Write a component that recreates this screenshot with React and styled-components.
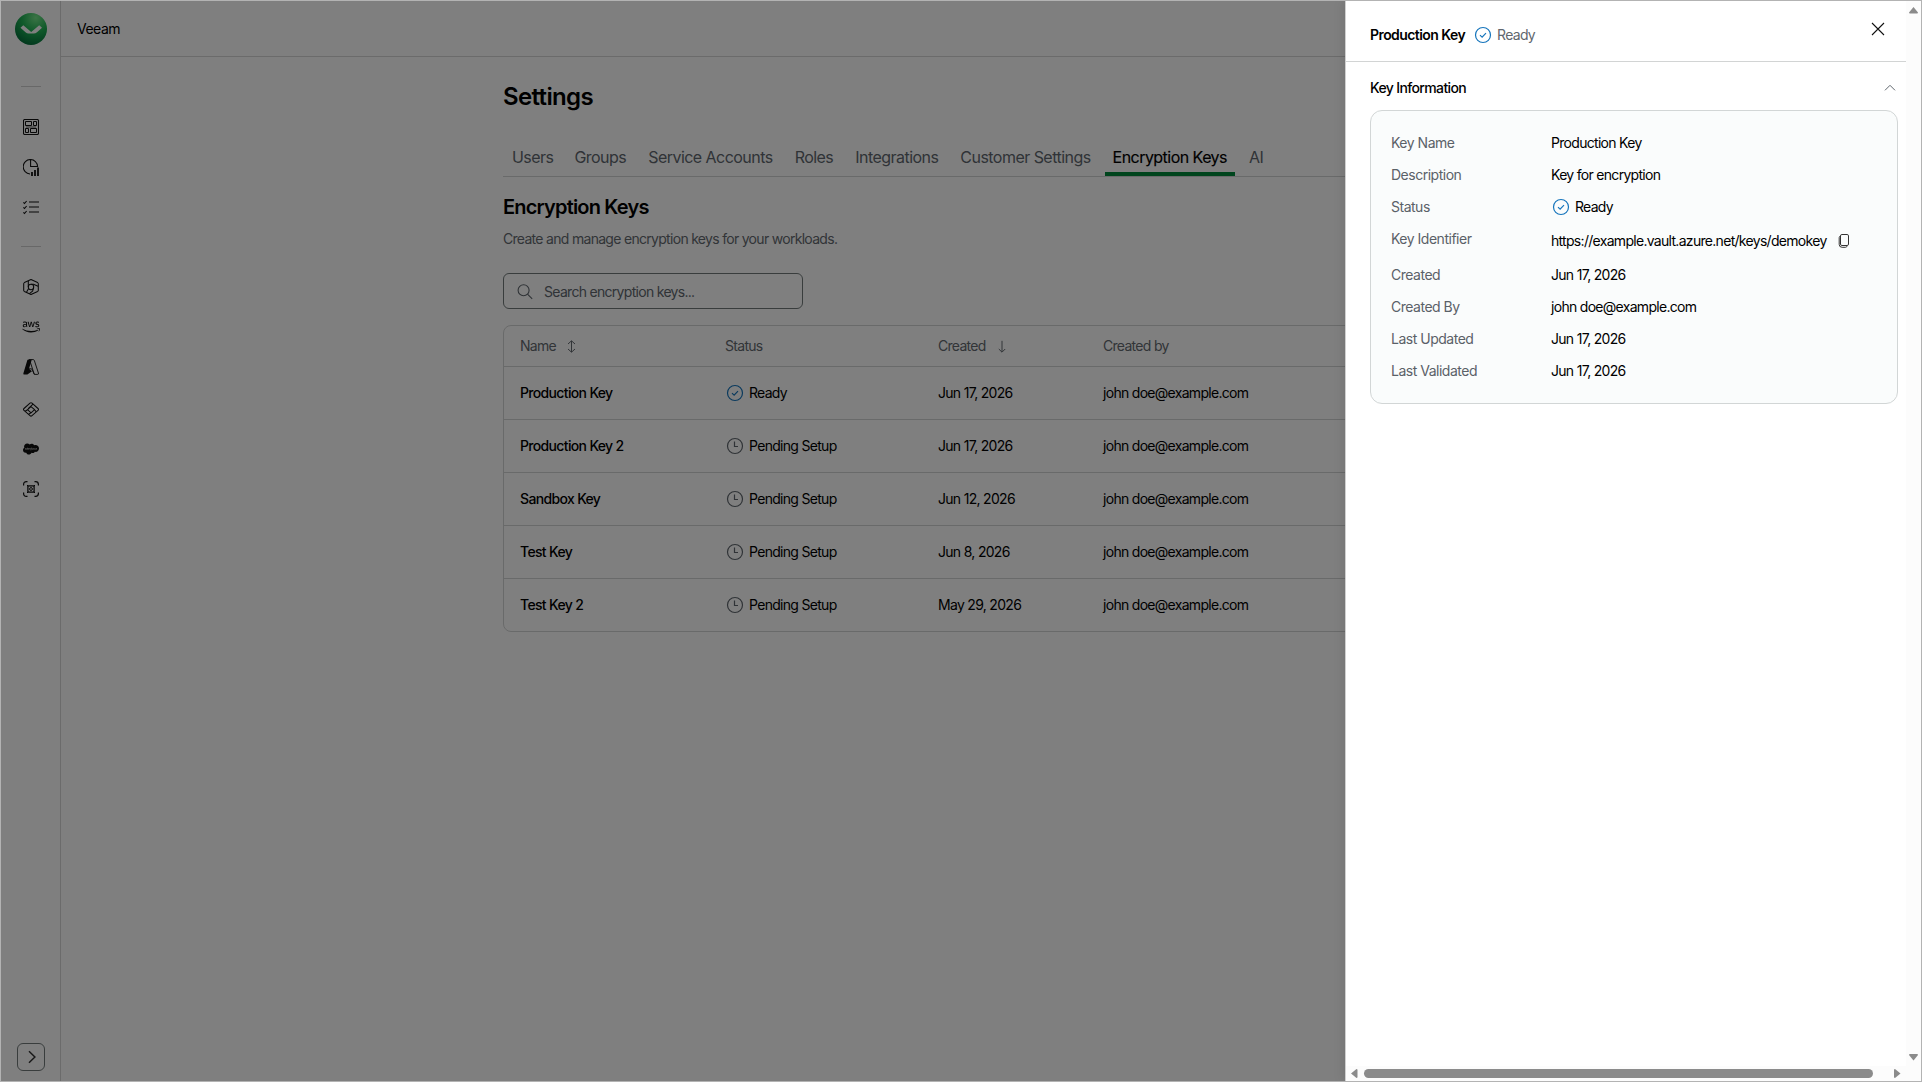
import React from "react";
import styled, { createGlobalStyle, css } from "styled-components";
import { FaAws, FaSalesforce } from "react-icons/fa";

const GlobalStyle = createGlobalStyle`
  * { box-sizing: border-box; }
  html, body { margin: 0; padding: 0; overflow: hidden; background: #fff; }
  body {
    font-family: Inter, "Liberation Sans", sans-serif;
    font-size: 14px;
    line-height: 20px;
    letter-spacing: -0.7px;
    color: #000;
  }
`;

const Frame = styled.div`
  position: relative;
  width: 1922px;
  height: 1082px;
  border: 1px solid #b3b3b3;
  background: #fff;
  display: flex;
  overflow: hidden;
`;

const Sidebar = styled.nav`
  width: 60px;
  flex: none;
  border-right: 1px solid #d6d6d6;
  display: flex;
  flex-direction: column;
  align-items: center;
  padding: 12px 0 10px;
`;

const NavDivider = styled.div`
  width: 20px;
  height: 1px;
  background: #d0d0d0;
  margin: ${(p) => p.$m};
`;

const NavGroup = styled.div`
  display: flex;
  flex-direction: column;
  align-items: center;
  gap: 24px;
`;

const NavItem = styled.div`
  width: 18px;
  height: 16px;
  margin-top: ${(p) => p.$mt || "0"};
  display: flex;
  align-items: center;
  justify-content: center;
  color: #111;
  svg { display: block; flex: none; }
`;

const ExpandButton = styled.button`
  margin: auto 0 0;
  width: 28px;
  height: 28px;
  padding: 0 0 0 2px;
  border: 1px solid #737b7b;
  border-radius: 6px;
  background: #fff;
  display: flex;
  align-items: center;
  justify-content: center;
`;

const Page = styled.div`
  flex: 1;
  min-width: 0;
  display: flex;
  flex-direction: column;
`;

const TopBar = styled.header`
  height: 56px;
  flex: none;
  border-bottom: 1px solid #d6d6d6;
  display: flex;
  align-items: center;
  padding: 0 16px;
  letter-spacing: -0.5px;
`;

const Content = styled.main`
  width: 976px;
  margin: 0 auto;
  padding-top: 24px;
  display: flex;
  flex-direction: column;
`;

const Title = styled.h1`
  margin: 0;
  font-size: 24px;
  line-height: 32px;
  font-weight: 600;
  letter-spacing: -0.65px;
`;

const Tabs = styled.div`
  display: flex;
  height: 40px;
  margin-top: 24px;
  border-bottom: 1px solid #d2d4d4;
`;

const Tab = styled.div`
  padding: 9px 8px 0;
  margin-right: ${(p) => (p.$first ? "5px" : "6px")};
  margin-left: ${(p) => (p.$first ? "1px" : "0")};
  font-size: 16px;
  line-height: 22px;
  letter-spacing: -0.54px;
  white-space: nowrap;
  color: ${(p) => (p.$active ? "#000" : "#60676e")};
  ${(p) =>
    p.$active &&
    css`
      background: linear-gradient(#008a3a, #008a3a) bottom / 100% 4px no-repeat;
      -webkit-text-stroke: 0.15px #000;
    `}
`;

const SectionTitle = styled.h2`
  margin: 16px 0 0;
  font-size: 20px;
  line-height: 28px;
  font-weight: 600;
  letter-spacing: -0.81px;
`;

const Description = styled.p`
  margin: 8px 0 0;
  color: #646a70;
`;

const Search = styled.div`
  margin-top: 24px;
  width: 300px;
  height: 36px;
  border: 1px solid #737b7b;
  border-radius: 6px;
  display: flex;
  align-items: center;
  gap: 11px;
  padding: 1px 13px 0;
  color: #60676e;
`;

const Table = styled.div`
  margin-top: 16px;
  border: 1px solid #d2d4d4;
  border-radius: 8px;
`;

const Row = styled.div`
  display: grid;
  grid-template-columns: 205px 213px 165px 1fr;
  align-items: center;
  height: ${(p) => (p.$head ? "41px" : "53px")};
  padding: 0 16px;
  color: ${(p) => (p.$head ? "#646a70" : "#000")};
  border-bottom: 1px solid #d2d4d4;
  &:last-child {
    height: 52px;
    border-bottom: 0;
  }
`;

const Cell = styled.div`
  display: flex;
  align-items: center;
  gap: ${(p) => p.$gap || "0"};
  font-weight: ${(p) => (p.$strong ? 500 : 400)};
  letter-spacing: ${(p) => (p.$strong ? "-0.66px" : "inherit")};
`;

const StatusWrap = styled.span`
  display: inline-flex;
  align-items: center;
  gap: 5px;
  padding-left: ${(p) => p.$indent || "0"};
  font-weight: 400;
  color: ${(p) => p.$color || "#000"};
`;

const Overlay = styled.div`
  position: absolute;
  inset: 0;
  background: rgba(0, 0, 0, 0.5);
`;

const Drawer = styled.aside`
  position: absolute;
  top: 0;
  right: 0;
  bottom: 0;
  width: 576px;
  background: #fff;
  border-left: 1px solid #d0d0d0;
  box-shadow: 0 0 12px rgba(0, 0, 0, 0.12);
  display: grid;
  grid-template-columns: 1fr 15px;
  grid-template-rows: 1fr 15px;
`;

const DrawerBody = styled.div`
  display: flex;
  flex-direction: column;
`;

const DrawerHeader = styled.div`
  height: 61px;
  border-bottom: 1px solid #d2d4d4;
  display: flex;
  align-items: center;
  padding: 7px 20px 0 24px;
`;

const DrawerTitle = styled.span`
  font-weight: 600;
  letter-spacing: -0.57px;
  margin-right: 9px;
`;

const CloseButton = styled.button`
  margin: -12px 0 0 auto;
  width: 16px;
  height: 16px;
  padding: 0;
  border: 0;
  background: none;
  display: flex;
`;

const SectionToggle = styled.div`
  display: flex;
  align-items: center;
  justify-content: space-between;
  height: 20px;
  margin: 16px 10px 12px 24px;
  font-weight: 500;
  letter-spacing: -0.64px;
`;

const InfoCard = styled.dl`
  margin: 0 8px 0 24px;
  height: 294px;
  padding: 22px 20px;
  background: #fafcfc;
  border: 1px solid #d2d6d6;
  border-radius: 12px;
  display: flex;
  flex-direction: column;
  gap: 12px;
`;

const InfoRow = styled.div`
  display: grid;
  grid-template-columns: 160px 1fr;
  min-height: ${(p) => (p.$tall ? "24px" : "20px")};
  dt, dd { margin: 0; }
  dt {
    color: #5a6168;
    letter-spacing: -0.49px;
  }
  dd {
    display: flex;
    align-items: center;
    white-space: nowrap;
  }
`;

const VScroll = styled.div`
  background: #fcfcfc;
  display: flex;
  flex-direction: column;
  justify-content: space-between;
  align-items: center;
  padding: 6px 0 5px;
`;

const HScroll = styled.div`
  background: #fcfcfc;
  display: flex;
  align-items: center;
  padding: 0 5px 0 5px;
`;

const Thumb = styled.div`
  flex: 1;
  height: 9px;
  margin: 0 21px 0 6px;
  border-radius: 5px;
  background: #8b8b8b;
`;

const Corner = styled.div`
  background: #fcfcfc;
`;

const line = { fill: "none", stroke: "currentColor" };

const Logo = () => (
  <svg width="32" height="32" viewBox="0 0 32 32">
    <defs>
      <radialGradient id="orb" cx="0.65" cy="0.15" r="0.95">
        <stop offset="0" stopColor="#78e88c" />
        <stop offset="0.45" stopColor="#20b455" />
        <stop offset="1" stopColor="#006638" />
      </radialGradient>
    </defs>
    <circle cx="16" cy="16" r="16" fill="url(#orb)" />
    <path d="M5.5 14.8 8.3 12.2 16.2 19 24.2 12.2 27 14.8 22 19.2Q20.6 20.4 18.6 20.4H13.8Q11.9 20.4 10.5 19.2Z" fill="#fff" />
  </svg>
);

const DashboardIcon = () => (
  <svg width="16" height="16" viewBox="0 0 16 16" {...line}>
    <rect x="0.5" y="0.5" width="15" height="15" rx="1.2" strokeWidth="1.1" />
    <path d="M2.5 2.5h6v4h-6zM10.5 2.5h3v4h-3zM2.5 9.5h3v4h-3zM7.5 9.5h6v4h-6z" strokeWidth="1" />
    <path d="M3 8H13" strokeWidth="1.6" strokeOpacity="0.4" />
  </svg>
);

const ReportIcon = () => (
  <svg width="16" height="17" viewBox="0 0 16 17" {...line}>
    <path d="M7 14.9A7.2 7.2 0 1 1 14.6 7.5H7.6V0.6" strokeWidth="1.05" />
    <path d="M9 13V17M12 11V17M15 8.5V17" strokeWidth="1.8" />
  </svg>
);

const ListIcon = () => (
  <svg width="16" height="15" viewBox="0 0 16 15" {...line}>
    <path d="M0.4 2.4 1.5 3.5 3.6 1M0.4 7.4 1.5 8.5 3.6 6M0.4 12.4 1.5 13.5 3.6 11" strokeWidth="1.1" />
    <path d="M6 2H16M6 7H16M6 12H16" strokeWidth="1.1" />
  </svg>
);

const HexIcon = () => (
  <svg width="16" height="16" viewBox="0 0 16 16" {...line} strokeWidth="1.05" strokeLinejoin="round">
    <path d="M8 0.6 14.6 3.6Q15.3 4 15.3 4.8V11.2Q15.3 12 14.6 12.4L8 15.5 1.4 12.4Q0.7 12 0.7 11.2V4.8Q0.7 4 1.4 3.6Z" />
    <circle cx="8" cy="8" r="2.7" />
    <path d="M5.3 8V1.9M8.2 5.3H10.5L15 7.2M10.6 8.6 9.6 12.2 6.4 14.7M5.6 9.4 3.6 13.1" />
  </svg>
);

const AzureIcon = () => (
  <svg width="16" height="16" viewBox="0 0 16 16" {...line} strokeLinejoin="round">
    <path d="M5.3 0.5H8.8L6 9.8 9 12.2 4.4 15.4H1Q0 15.4 0.4 14.2L4.3 1.2Q4.6 0.5 5.3 0.5Z" fill="currentColor" stroke="none" />
    <path d="M6 0.6H10.2Q11 0.6 11.3 1.4L15.4 14Q15.8 15.4 14.8 15.4H11.3L7 2.2M4.2 9.8H8.6L11.3 15.2" strokeWidth="0.9" />
  </svg>
);

const DiamondIcon = () => (
  <svg width="16" height="15" viewBox="0 0 16 15" {...line} strokeWidth="1.05" strokeLinejoin="round">
    <path d="M7 1.2Q8 0.3 9 1.2L15 6.5Q16 7.4 15 8.3L9 13.6Q8 14.6 7 13.6L1 8.3Q0 7.4 1 6.5Z" />
    <path d="M8 4.6 11.6 7.7 8 10.9 4.5 7.7ZM10 2.2 5.2 6.6M11.6 7.7 13 9.6M8 10.9 5.6 12.2M4.5 7.7 2.2 9.2" />
  </svg>
);

const ScanIcon = () => (
  <svg width="16" height="16" viewBox="0 0 16 16" {...line}>
    <path d="M0.6 4.5V3.4Q0.6 0.6 3.4 0.6H4.5M11.5 0.6H12.6Q15.4 0.6 15.4 3.4V4.5M15.4 11.5V12.6Q15.4 15.4 12.6 15.4H11.5M4.5 15.4H3.4Q0.6 15.4 0.6 12.6V11.5" strokeWidth="1.2" />
    <rect x="4.9" y="4.9" width="6.2" height="6.2" strokeWidth="1.3" />
    <path d="M4 4 5.2 5.2M12 4 10.8 5.2M4 12 5.2 10.8M12 12 10.8 10.8" strokeWidth="1" />
    <circle cx="8" cy="8" r="1.4" strokeWidth="1" />
  </svg>
);

const Chevron = () => (
  <svg width="14" height="14" viewBox="0 0 14 14" fill="none" stroke="#333" strokeWidth="1.5">
    <path d="M4 1.2 9.9 7 4 12.8" />
  </svg>
);

const SearchIcon = () => (
  <svg width="16" height="16" viewBox="0 0 16 16" {...line} strokeWidth="1.1">
    <circle cx="6.6" cy="6.2" r="5.5" />
    <path d="M10.5 10.1 15.2 14.8" />
  </svg>
);

const SortBoth = () => (
  <svg width="10" height="13" viewBox="0 0 10 13" {...line} strokeWidth="1">
    <path d="M4.5 1V12M1 4 4.5 0.8 8 4M1 9 4.5 12.2 8 9" />
  </svg>
);

const SortDown = () => (
  <svg width="10" height="13" viewBox="0 0 10 13" {...line} strokeWidth="1">
    <path d="M5 0.8V12M1.8 9 5 12.2 8.2 9" />
  </svg>
);

const CheckIcon = () => (
  <svg width="18" height="18" viewBox="0 0 18 18" fill="none" stroke="#1675bc" strokeWidth="1.2">
    <circle cx="9" cy="9" r="7.5" />
    <path d="M6 9.1 8.1 11.1 12 7.1" />
  </svg>
);

const ClockIcon = () => (
  <svg width="18" height="18" viewBox="0 0 18 18" fill="none" stroke="#60676e" strokeWidth="1.2">
    <circle cx="9" cy="9" r="7.5" />
    <path d="M8.5 4.5V9.5H12" />
  </svg>
);

const CloseIcon = () => (
  <svg width="16" height="16" viewBox="0 0 16 16" fill="none" stroke="#111" strokeWidth="1.1">
    <path d="M2 2 14 14M14 2 2 14" />
  </svg>
);

const ChevronUp = () => (
  <svg width="12" height="8" viewBox="0 0 12 8" fill="none" stroke="#60676e" strokeWidth="1">
    <path d="M1 6.3 6 1.3 11 6.3" />
  </svg>
);

const CopyIcon = () => (
  <svg width="12" height="16" viewBox="0 0 12 16" fill="none" stroke="#333" strokeWidth="1">
    <rect x="2.5" y="1.5" width="8" height="11" rx="1.4" />
    <path d="M2.6 3Q1.2 3.3 1.2 4.6V11.4Q1.2 14.3 4.1 14.3H7.4Q8.8 14.3 9 13.2" />
  </svg>
);

const Arrow = ({ d, w = 9, h = 7 }) => (
  <svg width={w} height={h} viewBox={`0 0 ${w} ${h}`} fill="#8b8b8b">
    <path d={d} />
  </svg>
);

const IconGap = styled.span`
  display: inline-flex;
  margin-left: 11px;
`;

const StatusLabel = ({ ready, ...rest }) => (
  <StatusWrap {...rest}>
    {ready ? <CheckIcon /> : <ClockIcon />}
    {ready ? "Ready" : "Pending Setup"}
  </StatusWrap>
);

const tabs = ["Users", "Groups", "Service Accounts", "Roles", "Integrations", "Customer Settings", "Encryption Keys", "AI"];

const keys = [
  ["Production Key", true, "Jun 17, 2026"],
  ["Production Key 2", false, "Jun 17, 2026"],
  ["Sandbox Key", false, "Jun 12, 2026"],
  ["Test Key", false, "Jun 8, 2026"],
  ["Test Key 2", false, "May 29, 2026"],
];

const email = "john doe@example.com";

const details = [
  ["Key Name", "Production Key"],
  ["Description", "Key for encryption"],
  ["Status", <StatusLabel key="s" ready $indent="1px" />],
  ["Key Identifier", <>https://example.vault.azure.net/keys/demokey<IconGap><CopyIcon /></IconGap></>, true],
  ["Created", "Jun 17, 2026"],
  ["Created By", email],
  ["Last Updated", "Jun 17, 2026"],
  ["Last Validated", "Jun 17, 2026"],
];

export default function App() {
  return (
    <>
      <GlobalStyle />
      <Frame>
        <Sidebar>
          <Logo />
          <NavDivider $m="41px 0 32px" />
          <NavGroup>
            <NavItem><DashboardIcon /></NavItem>
            <NavItem><ReportIcon /></NavItem>
            <NavItem><ListIcon /></NavItem>
          </NavGroup>
          <NavDivider $m="31px 0 32px" />
          <NavGroup>
            <NavItem><HexIcon /></NavItem>
            <NavItem><FaAws size={18} /></NavItem>
            <NavItem><AzureIcon /></NavItem>
            <NavItem $mt="2px"><DiamondIcon /></NavItem>
            <NavItem><FaSalesforce size={16} /></NavItem>
            <NavItem><ScanIcon /></NavItem>
          </NavGroup>
          <ExpandButton><Chevron /></ExpandButton>
        </Sidebar>
        <Page>
          <TopBar>Veeam</TopBar>
          <Content>
            <Title>Settings</Title>
            <Tabs>
              {tabs.map((t, i) => (
                <Tab key={t} $first={i === 0} $active={t === "Encryption Keys"}>{t}</Tab>
              ))}
            </Tabs>
            <SectionTitle>Encryption Keys</SectionTitle>
            <Description>Create and manage encryption keys for your workloads.</Description>
            <Search><SearchIcon />Search encryption keys...</Search>
            <Table>
              <Row $head>
                <Cell $gap="11px">Name<SortBoth /></Cell>
                <Cell>Status</Cell>
                <Cell $gap="11px">Created<SortDown /></Cell>
                <Cell>Created by</Cell>
              </Row>
              {keys.map(([name, ready, date]) => (
                <Row key={name}>
                  <Cell $strong>{name}</Cell>
                  <Cell><StatusLabel ready={ready} $indent="1px" /></Cell>
                  <Cell>{date}</Cell>
                  <Cell>{email}</Cell>
                </Row>
              ))}
            </Table>
          </Content>
        </Page>
        <Overlay />
        <Drawer>
          <DrawerBody>
            <DrawerHeader>
              <DrawerTitle>Production Key</DrawerTitle>
              <StatusLabel ready $color="#60676e" />
              <CloseButton><CloseIcon /></CloseButton>
            </DrawerHeader>
            <SectionToggle>Key Information<ChevronUp /></SectionToggle>
            <InfoCard>
              {details.map(([label, value, tall]) => (
                <InfoRow key={label} $tall={tall}>
                  <dt>{label}</dt>
                  <dd>{value}</dd>
                </InfoRow>
              ))}
            </InfoCard>
          </DrawerBody>
          <VScroll>
            <Arrow d="M4.5 0 9 5.5Q9 6.5 8 6.5H1Q0 6.5 0 5.5Z" />
            <Arrow d="M4.5 6.5 9 1Q9 0 8 0H1Q0 0 0 1Z" />
          </VScroll>
          <HScroll>
            <Arrow w={7} h={9} d="M0 4.5 5.5 0Q6.5 0 6.5 1V8Q6.5 9 5.5 9Z" />
            <Thumb />
            <Arrow w={7} h={9} d="M6.5 4.5 1 0Q0 0 0 1V8Q0 9 1 9Z" />
          </HScroll>
          <Corner />
        </Drawer>
      </Frame>
    </>
  );
}
